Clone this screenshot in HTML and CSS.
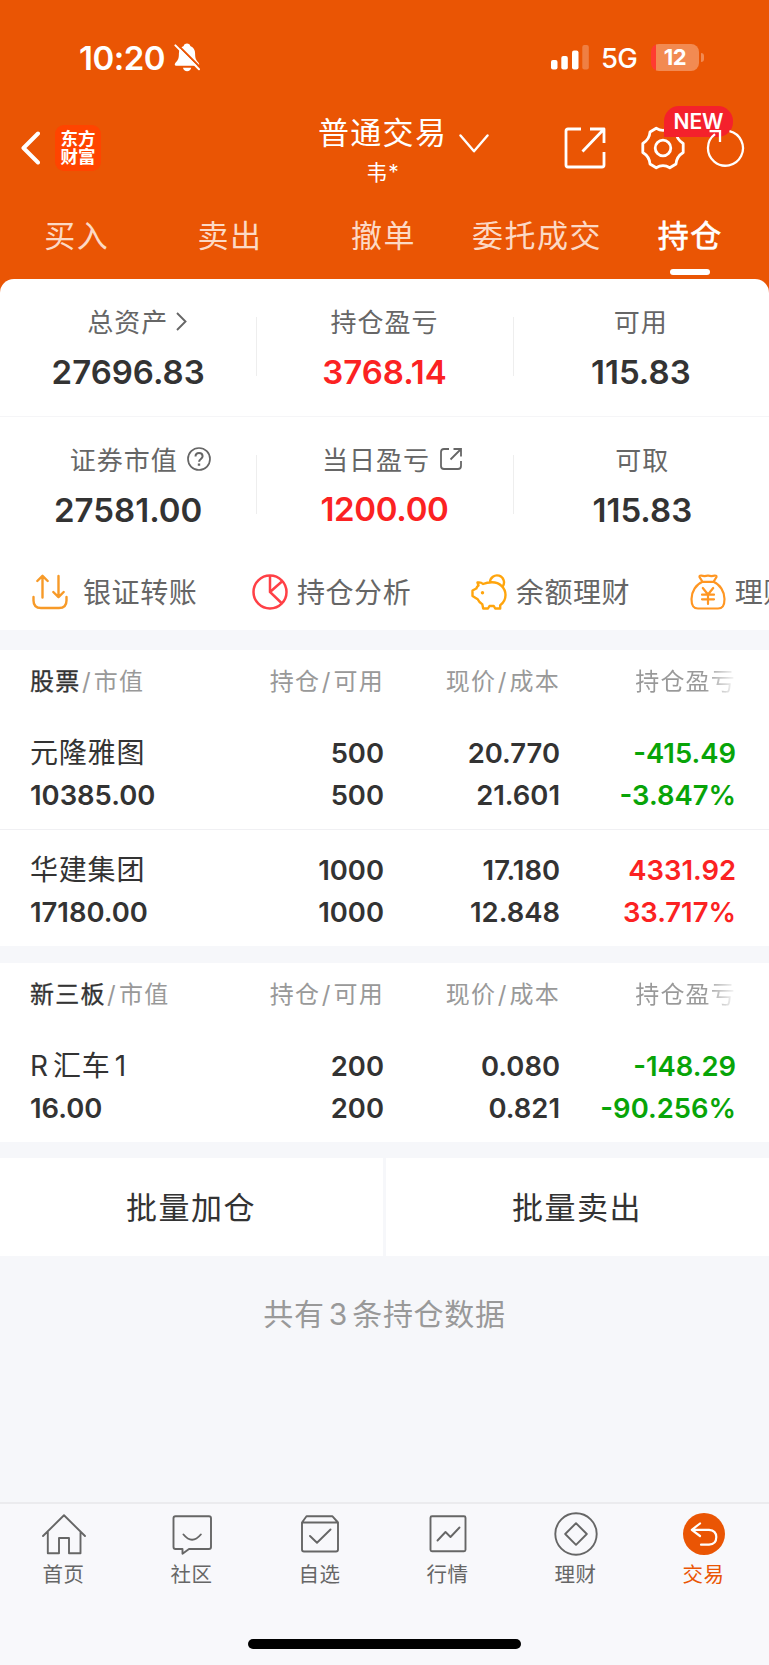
FILE: index.html
```html
<!DOCTYPE html>
<html lang="zh-CN">
<head>
    <meta charset="UTF-8">
    <meta name="viewport" content="width=device-width, initial-scale=1.0">
    <title>普通交易 - 持仓</title>
    <link rel="stylesheet" href="styles.css">
</head>
<body>
    <header class="top">
        <div class="status">
            <div class="clock">
                <span class="time">10:20</span>
                <svg class="bell" viewBox="0 0 26 29" width="26" height="29">
                    <path d="M13 .6c-1.800 0-3 .9-3.300 2.300C6.300 4.200 4.900 7 4.900 10.500c0 5-1 6.500-3 8.800-1.800 2-1.300 3.500.8 3.500h20.600c2.100 0 2.600-1.500.8-3.500-2-2.300-3-3.800-3-8.800 0-3.500-1.400-6.300-4.800-7.600C16 1.500 14.800.6 13 .6z" fill="#fff"/>
                    <path d="M9 24.700h8.200c-.4 2.200-2 3.500-4.100 3.500S9.400 26.900 9 24.700z" fill="#fff"/>
                    <path d="M2.500.8 27 25.300" stroke="#ea5504" stroke-width="2.200"/>
                    <path d="M1.400 2.400 25 26.200" stroke="#fff" stroke-width="2" stroke-linecap="round"/>
                </svg>
            </div>
            <div class="signal">
                <svg viewBox="0 0 38 25" width="38" height="25" fill="#fff">
                    <rect x="0" y="15" width="6.500" height="9.500" rx="2"/>
                    <rect x="10.300" y="11" width="6.500" height="13.500" rx="2"/>
                    <rect x="21" y="5.500" width="6.500" height="19" rx="2"/>
                    <rect x="31.300" y="0" width="6.500" height="24.500" rx="2" opacity=".25"/>
                </svg>
                <span class="net">5G</span>
                <span class="battery"><b>12</b></span>
            </div>
        </div>

        <nav class="nav">
            <div class="nav-left">
                <svg viewBox="0 0 19 34" width="19" height="34" fill="none" stroke="#fff" stroke-width="4" stroke-linecap="round" stroke-linejoin="round"><path d="M17 2.500 2.500 17 17 31.500"/></svg>
                <div class="logo">东方<br>财富</div>
            </div>
            <div class="account">
                <div class="account-name">普通交易
                    <svg viewBox="0 0 30 19" width="30" height="19" fill="none" stroke="#fff" stroke-width="2.400" stroke-linecap="round" stroke-linejoin="round"><path d="M1.500 1.500 15 17.300 28.500 1.500"/></svg>
                </div>
                <div class="account-user">韦*</div>
            </div>
            <div class="nav-right">
                <svg class="i-share" viewBox="0 0 42 42" width="42" height="42" fill="none" stroke="#fff" stroke-width="2.800" stroke-linejoin="round"><path d="M17 2H4Q2 2 2 4V38Q2 40 4 40H38Q40 40 40 38V25M26 2H40V16M40 2 18.500 24.500"/></svg>
                <svg class="i-gear" viewBox="0 0 44 44" width="44" height="44" fill="none" stroke="#fff" stroke-width="2.800" stroke-linejoin="round">
                    <path d="M15.200 2.200Q22 6.400 28.800 2.200L35 6Q35.500 13.400 42.200 17.500V26.500Q35.500 30.600 35 38L28.800 41.800Q22 37.600 15.200 41.800L9 38Q8.500 30.600 1.800 26.500V17.500Q8.500 13.400 9 6Z"/>
                    <circle cx="22" cy="22" r="7.800"/>
                </svg>
                <span class="badge">NEW</span>
                <svg class="i-refresh" viewBox="0 0 40 40" width="40" height="40" fill="none" stroke="#fff" stroke-width="2.300"><path d="M24.500 3.200A17.500 17.500 0 1 1 10 6.200M4.500 3.200H15V14"/></svg>
            </div>
        </nav>

        <div class="tabs">
            <div class="tab">买入</div>
            <div class="tab">卖出</div>
            <div class="tab">撤单</div>
            <div class="tab">委托成交</div>
            <div class="tab active">持仓</div>
        </div>
    </header>

    <section class="summary">
        <div class="stats">
            <div class="stat">
                <div class="label more">总资产 <svg viewBox="0 0 11 19" width="11" height="19" fill="none" stroke="#666" stroke-width="1.900"><path d="M1 1 9.500 9.500 1 18"/></svg></div>
                <div class="num">27696.83</div>
            </div>
            <div class="stat">
                <div class="label">持仓盈亏</div>
                <div class="num red">3768.14</div>
            </div>
            <div class="stat">
                <div class="label">可用</div>
                <div class="num">115.83</div>
            </div>
        </div>
        <div class="stats">
            <div class="stat">
                <div class="label info">证券市值
                    <svg viewBox="0 0 24 24" width="24" height="24" fill="none" stroke="#666" stroke-width="1.700"><circle cx="12" cy="12" r="11"/><path d="M8.500 9.500C8.500 7.300 10 6 12 6s3.600 1.300 3.600 3.300c0 2.600-3.500 2.700-3.500 5.500" stroke-width="2"/><path d="M12 16.600v2.200" stroke-width="2.400"/></svg>
                </div>
                <div class="num">27581.00</div>
            </div>
            <div class="stat">
                <div class="label info today">当日盈亏
                    <svg viewBox="0 0 24 24" width="24" height="24" fill="none" stroke="#666" stroke-width="1.800"><path d="M10 2H5Q2 2 2 5V19Q2 22 5 22H19Q22 22 22 19V14M14.500 2H22V9.500M22 2 11.500 12.500"/></svg>
                </div>
                <div class="num red today">1200.00</div>
            </div>
            <div class="stat last">
                <div class="label">可取</div>
                <div class="num">115.83</div>
            </div>
        </div>
        <div class="quick">
            <div class="quick-item wide">
                <svg viewBox="0 0 36 36" width="36" height="36" fill="none" stroke="#f79a28" stroke-width="2.400" stroke-linecap="round" stroke-linejoin="round"><path d="M1.500 23v3.500Q1.500 34 9 34H27Q34.500 34 34.500 26.500V23M10.500 23.500V2M5.300 7 10.500 1.800 15.700 7M26.500 2V23M21.300 18 26.500 23.200 31.700 18"/></svg>
                <span>银证转账</span>
            </div>
            <div class="quick-item">
                <svg viewBox="0 0 36 36" width="36" height="36" fill="none" stroke="#ff4046" stroke-width="2.500"><circle cx="18" cy="18" r="16.500"/><path d="M18 1.500V18L30 29.500M18 18 30.500 7"/></svg>
                <span>持仓分析</span>
            </div>
            <div class="quick-item">
                <svg viewBox="0 0 36 36" width="36" height="36" fill="none" stroke="#ffa50d" stroke-width="2.400" stroke-linecap="round" stroke-linejoin="round"><path d="M6.500 8.500Q10 8 12 10Q16 8.300 21 8.300C29 8.300 34.500 14 34.500 21C34.500 25.500 32.300 29 29.200 31.200V34.500H24.200L22.800 32H18.500L17 34.500H12.200L11.300 30.200C9 29 7.800 27.500 6.700 25.200L1.500 22V16.500L5.300 14.500Q6 12.500 7.500 11.500ZM19 8.300A7 7 0 1 1 31.800 12.300"/><circle cx="11.500" cy="18.800" r="1.700" fill="#ffa50d" stroke="none"/></svg>
                <span>余额理财</span>
            </div>
            <div class="quick-item">
                <svg viewBox="0 0 36 36" width="36" height="36" fill="none" stroke="#ff9622" stroke-width="2.200" stroke-linecap="round" stroke-linejoin="round"><path d="M12.500 7.800 9.500 3Q9.300 1.500 11 1.500Q14.500 2.600 18 1.500Q21.500 2.600 25 1.500Q26.700 1.500 26.500 3L23.500 7.800ZM12.500 7.800C6 10.500 1.500 17.500 1.500 25C1.500 32 3.500 34.500 8 34.500H28C32.500 34.500 34.500 32 34.500 25C34.500 17.500 30 10.500 23.500 7.800M12.800 14 18 20.500 23.200 14M12 20.700H24M12 25.300H24M18 20.500V30"/></svg>
                <span>理财</span>
            </div>
        </div>
    </section>

    <section class="holdings">
        <div class="row head">
            <div><em>股票</em><i>/</i>市值</div>
            <div>持仓<i>/</i>可用</div>
            <div>现价<i>/</i>成本</div>
            <div class="fade">持仓盈亏</div>
        </div>
        <div class="row">
            <div><span class="name">元隆雅图</span><span>10385.00</span></div>
            <div><span>500</span><span>500</span></div>
            <div><span>20.770</span><span>21.601</span></div>
            <div class="green"><span>-415.49</span><span>-3.847%</span></div>
        </div>
        <div class="row line">
            <div><span class="name">华建集团</span><span>17180.00</span></div>
            <div><span>1000</span><span>1000</span></div>
            <div><span>17.180</span><span>12.848</span></div>
            <div class="red"><span>4331.92</span><span>33.717%</span></div>
        </div>
    </section>

    <section class="holdings">
        <div class="row head">
            <div><em>新三板</em><i>/</i>市值</div>
            <div>持仓<i>/</i>可用</div>
            <div>现价<i>/</i>成本</div>
            <div class="fade">持仓盈亏</div>
        </div>
        <div class="row">
            <div><span class="name">R 汇车 1</span><span>16.00</span></div>
            <div><span>200</span><span>200</span></div>
            <div><span>0.080</span><span>0.821</span></div>
            <div class="green"><span>-148.29</span><span>-90.256%</span></div>
        </div>
    </section>

    <div class="actions">
        <button>批量加仓</button>
        <button>批量卖出</button>
    </div>

    <p class="total">共有 3 条持仓数据</p>

    <footer class="tabbar">
        <div class="menu">
            <div class="menu-item">
                <svg viewBox="0 0 44 44" width="44" height="44"><path d="M1 24 22 3.300 43 24M5.800 20V41.300H17V26H27V41.300H38.500V20"/></svg>
                <span>首页</span>
            </div>
            <div class="menu-item">
                <svg viewBox="0 0 44 44" width="44" height="44"><path d="M5.500 4.300H39Q41 4.300 41 6.300V35Q41 37 39 37H19L12.500 41.700V37H5.500Q3.500 37 3.500 35V6.300Q3.500 4.300 5.500 4.300ZM13.500 22.500Q22 33 30.800 22.500"/></svg>
                <span>社区</span>
            </div>
            <div class="menu-item">
                <svg viewBox="0 0 44 44" width="44" height="44"><path d="M8.500 4.300H34.500L40 10.500V37.500Q40 39.500 38 39.500H6Q4 39.500 4 37.500V10.500ZM4 10.500H40M12 24 19 30.800 32.500 17.500"/></svg>
                <span>自选</span>
            </div>
            <div class="menu-item">
                <svg viewBox="0 0 44 44" width="44" height="44"><rect x="4.500" y="4.300" width="35" height="35" rx="1.500"/><path d="M11.500 28.500 19.500 20 24.500 25 33.500 15.500"/></svg>
                <span>行情</span>
            </div>
            <div class="menu-item">
                <svg viewBox="0 0 44 44" width="44" height="44"><circle cx="22" cy="22" r="20.700"/><path d="M22 11.200 32.800 22 22 32.800 11.200 22Z"/></svg>
                <span>理财</span>
            </div>
            <div class="menu-item on">
                <svg viewBox="0 0 44 44" width="44" height="44"><circle class="disc" cx="22" cy="22" r="21"/><path class="arrow" d="M18 11.500 9.800 17.800 18 24M10 17.800H27Q34.300 18.500 34.300 25Q34.300 32.300 27 32.700H19"/></svg>
                <span>交易</span>
            </div>
        </div>
        <div class="home-bar"></div>
    </footer>
</body>
</html>
```

FILE: styles.css
```css
/* --- RESET & BASE -------------------------------------- */
* { box-sizing: border-box; margin: 0; padding: 0; }
body {
    height: 1665px;
    display: flex;
    flex-direction: column;
    font-family: Inter, "Noto Sans CJK SC", sans-serif;
    color: #333;
    background: #f6f7fa;
    overflow: hidden;
}
svg { display: block; flex: none; }
em, i { font-style: normal; }
.red { color: #fb2222; }
.green { color: #08a408; }

/* --- HEADER -------------------------------------------- */
.top {
    flex: none;
    height: 293px;
    margin-bottom: -14px;
    background: #ea5504;
    color: #fff;
}
.status {
    height: 115px;
    padding: 0 65px 0 79px;
    display: flex;
    align-items: center;
    justify-content: space-between;
}
.clock, .signal { display: flex; align-items: center; }
.time { width: 95px; font-size: 33px; font-weight: 600; letter-spacing: -.5px; }
.net { margin-left: 12px; padding-top: 1px; width: 37px; font-size: 27.500px; font-weight: 500; letter-spacing: -.7px; }
.battery {
    position: relative;
    width: 48px;
    height: 27px;
    margin-left: 13px;
    margin-right: 5px;
    border-radius: 8px;
    background: linear-gradient(90deg, #ff3b30 5.500px, #f28a52 5.500px);
    text-align: center;
    line-height: 27px;
}
.battery b { font-size: 22px; font-weight: 700; letter-spacing: -.3px; }
.battery::after {
    content: "";
    position: absolute;
    right: -5px;
    top: 9px;
    width: 3px;
    height: 9px;
    border-radius: 0 4px 4px 0;
    background: #f28a52;
}

.nav {
    height: 95px;
    padding: 0 24px 0 21px;
    display: grid;
    grid-template-columns: 1fr 180px 1fr;
}
.nav-left { display: flex; align-items: center; gap: 15px; height: 65px; }
.logo {
    width: 46px;
    height: 46px;
    padding-top: 5px;
    border-radius: 9px;
    background: #ff4400;
    text-align: center;
    font-size: 17.500px;
    font-weight: 700;
    line-height: 18.500px;
}
.account { padding-left: 25px; }
.account-name {
    display: flex;
    align-items: center;
    gap: 12px;
    height: 30px;
    white-space: nowrap;
    font-size: 31px;
    letter-spacing: 1.300px;
}
.account-name svg { margin-top: 27px; }
.account-user { width: 130px; padding-top: 7px; text-align: center; font-size: 21px; line-height: 42px; letter-spacing: 1px; }
.nav-right { position: relative; display: flex; justify-content: flex-end; align-items: center; height: 66px; }
.i-share { margin-right: 35px; }
.i-gear { margin-right: 20px; }
.badge {
    position: absolute;
    right: 12px;
    top: -9px;
    width: 69px;
    height: 31px;
    border-radius: 15px 15px 15px 0;
    background: #f4212c;
    text-align: center;
    font-size: 21px;
    font-weight: 600;
    line-height: 31px;
}
.i-refresh { position: relative; }

.tabs { display: grid; grid-template-columns: repeat(5, 1fr); margin-right: 2px; }
.tab {
    height: 66px;
    text-align: center;
    font-size: 31px;
    line-height: 52px;
    letter-spacing: 1.500px;
    color: #fcd9c5;
}
.tab.active { color: #fff; -webkit-text-stroke: .6px #fff; }
.tab.active::after {
    content: "";
    display: block;
    width: 40px;
    height: 6px;
    margin: 7px auto 0;
    border-radius: 3px;
    background: #fff;
}

/* --- ACCOUNT SUMMARY ----------------------------------- */
.summary { flex: none; height: 351px; border-radius: 14px 14px 0 0; background: #fff; overflow: hidden; }
.stats {
    height: 138px;
    padding-top: 20px;
    display: grid;
    grid-template-columns: repeat(3, 1fr);
    border-bottom: 1px solid #f5f5f7;
}
.stats + .stats { height: 137px; padding-top: 20px; border-bottom: 0; }
.stat { position: relative; text-align: center; }
.stat.last { padding-left: 3px; }
.stat + .stat::before {
    content: "";
    position: absolute;
    left: 0;
    top: 18px;
    width: 1px;
    height: 59px;
    background: #eee;
}
.label {
    display: flex;
    align-items: center;
    justify-content: center;
    height: 42px;
    font-size: 26px;
    letter-spacing: 1px;
    color: #666;
}
.label svg { margin-top: 2px; }
.label.more { gap: 8px; padding-left: 18px; }
.label.info { gap: 9px; padding-left: 24px; }
.label.today { padding-left: 16px; }
.num { height: 56px; font-size: 33px; font-weight: 600; line-height: 63px; }
.num.today { line-height: 60px; letter-spacing: -.3px; }

.quick { display: flex; gap: 59.500px; padding-left: 32px; height: 76px; white-space: nowrap; overflow: hidden; }
.quick-item { display: flex; align-items: center; gap: 9px; flex: none; height: 75px; font-size: 28px; letter-spacing: .6px; color: #666; }
.quick-item span { margin-top: -1px; }
.quick-item.wide { gap: 15px; margin-right: -5px; }

/* --- HOLDINGS ------------------------------------------ */
.holdings { flex: none; margin-top: 20px; background: #fff; }
.holdings + .holdings { margin-top: 17px; }
.row {
    height: 117px;
    padding: 20px 33px 0 30px;
    display: grid;
    grid-template-columns: 194px 160px 176px 176px;
    text-align: right;
    font-size: 27.400px;
    font-weight: 600;
}
.row.line { padding-top: 19px; border-top: 1px solid #f0f0f3; }
.row > div:first-child { text-align: left; }
.row span { display: block; height: 42px; line-height: 42px; }
.row .name { font-size: 28px; font-weight: 400; letter-spacing: .8px; word-spacing: -4.500px; }
.row.head {
    height: 62px;
    padding-top: 0;
    font-size: 24px;
    font-weight: 400;
    line-height: 64px;
    letter-spacing: 1.200px;
    color: #999;
}
.head em { color: #333; -webkit-text-stroke: .3px #333; }
.head i { margin: 0 2px 0 1.500px; }
.fade {
    background: linear-gradient(90deg, #999 145px, #fff 178px);
    -webkit-background-clip: text;
    background-clip: text;
    color: transparent;
}

/* --- ACTIONS ------------------------------------------- */
.actions { flex: none; display: grid; grid-template-columns: 1fr 1fr; gap: 3px; margin-top: 16px; }
.actions button {
    height: 98px;
    padding: 0 1px 3px 0;
    border: none;
    background: #fff;
    color: #333;
    font: 31px Inter, "Noto Sans CJK SC", sans-serif;
    letter-spacing: 1.500px;
}
.total { padding-top: 32px; text-align: center; font-size: 30px; line-height: 52px; color: #999; letter-spacing: .7px; word-spacing: -5px; }

/* --- BOTTOM BAR ---------------------------------------- */
.tabbar { margin-top: auto; flex: none; height: 163px; border-top: 2px solid #ebebee; background: #f8f8fb; }
.menu { display: grid; grid-template-columns: repeat(6, 128px); height: 135px; padding-top: 8px; }
.menu-item { display: flex; flex-direction: column; align-items: center; font-size: 20.500px; letter-spacing: .5px; color: #666; }
.menu-item svg { fill: none; stroke: #666; stroke-width: 1.900; stroke-linejoin: round; stroke-linecap: round; }
.menu-item span { margin-left: -1px; line-height: 38px; }
.menu-item.on { color: #ea5504; }
.menu-item .disc { fill: #ea5504; stroke: none; }
.menu-item .arrow { stroke: #fff; stroke-width: 2.200; }
.home-bar { width: 273px; height: 10px; margin: 0 auto; border-radius: 5px; background: #000; }
```
